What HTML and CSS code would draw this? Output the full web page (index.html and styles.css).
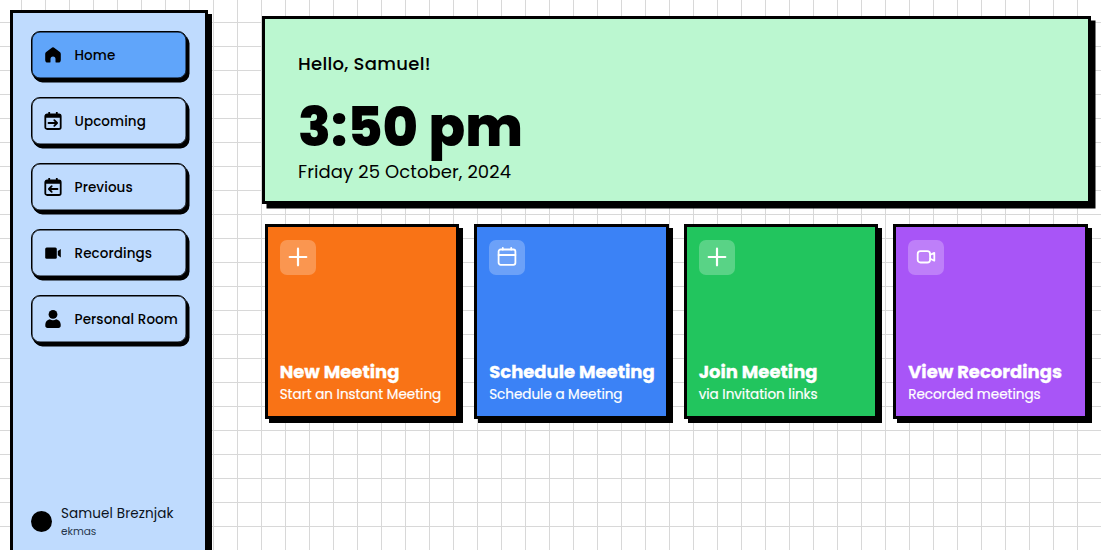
FILE: index.html
```html
<!DOCTYPE html>
<html lang="en">
<head>
<meta charset="utf-8">
<title>Meetings</title>
<link rel="stylesheet" href="styles.css">
</head>
<body>
<div class="app">
  <aside class="sidebar">
    <nav class="nav">
      <a class="nav-item active">
        <svg class="nav-icon" viewBox="0 0 18 18"><path d="M9 1.300c.6 0 1 .2 1.500.6l5 3.900c.9.700 1.300 1.400 1.300 2.500V14c0 1.700-.9 2.600-2.600 2.600h-1.800c-.6 0-.9-.3-.9-.9v-2.600a2.500 2.500 0 0 0-5 0v2.600c0 .6-.3.9-.9.9H3.800c-1.700 0-2.600-.9-2.600-2.600V8.300c0-1.100.4-1.800 1.300-2.500l5-3.900c.5-.4.9-.6 1.500-.6z"/></svg>
        <span>Home</span>
      </a>
      <a class="nav-item">
        <svg class="nav-icon" viewBox="0 0 18 18"><rect class="line" x="1.300" y="2.500" width="15.400" height="14.500" rx="1.800"/><path d="M1 2.500h16v3.300H1zM4.300 0h1.800v3H4.300zM11.900 0h1.800v3h-1.800z"/><path class="line" d="M4.500 11h8.500M10.300 8.200 13.100 11l-2.800 2.800"/></svg>
        <span>Upcoming</span>
      </a>
      <a class="nav-item">
        <svg class="nav-icon" viewBox="0 0 18 18"><rect class="line" x="1.300" y="2.500" width="15.400" height="14.500" rx="1.800"/><path d="M1 2.500h16v3.300H1zM4.300 0h1.800v3H4.300zM11.900 0h1.800v3h-1.800z"/><path class="line" d="M13.500 11H5M7.700 8.200 4.900 11l2.800 2.800"/></svg>
        <span>Previous</span>
      </a>
      <a class="nav-item">
        <svg class="nav-icon" viewBox="0 0 18 18"><rect x="1.200" y="3.500" width="11.600" height="11.300" rx="1.500"/><path d="M13.800 7 16.800 5v8.400l-3-2.200z"/></svg>
        <span>Recordings</span>
      </a>
      <a class="nav-item">
        <svg class="nav-icon" viewBox="0 0 18 18"><circle cx="9" cy="4.400" r="4.400"/><path d="M5.800 9.300c1.900 1.200 4.500 1.200 6.400 0 2.600.5 4.500 2.600 4.500 5.300v1.100c0 1.300-.9 2.200-2.200 2.200h-11c-1.300 0-2.200-.9-2.200-2.200v-1.100c0-2.700 1.900-4.800 4.500-5.300z"/></svg>
        <span>Personal Room</span>
      </a>
    </nav>
    <div class="user">
      <div class="avatar"></div>
      <div class="user-text">
        <div class="user-name">Samuel Breznjak</div>
        <div class="user-handle">ekmas</div>
      </div>
    </div>
  </aside>
  <main class="main">
    <section class="hero">
      <h2 class="greeting">Hello, Samuel!</h2>
      <div class="time">3:50 pm</div>
      <div class="date">Friday 25 October, 2024</div>
    </section>
    <section class="cards">
      <article class="card orange">
        <div class="tile"><svg viewBox="0 0 20 20"><path d="M10 1.700v16.600M1.700 10h16.600"/></svg></div>
        <div><h3>New Meeting</h3><p>Start an Instant Meeting</p></div>
      </article>
      <article class="card blue">
        <div class="tile"><svg class="thin" viewBox="0 0 20 20"><rect x="1.600" y="2.500" width="16.800" height="15.300" rx="2"/><path d="M1.600 8h16.800M5.800 1v1.500M14.200 1v1.500"/></svg></div>
        <div><h3>Schedule Meeting</h3><p>Schedule a Meeting</p></div>
      </article>
      <article class="card green">
        <div class="tile"><svg viewBox="0 0 20 20"><path d="M10 1.700v16.600M1.700 10h16.600"/></svg></div>
        <div><h3>Join Meeting</h3><p>via Invitation links</p></div>
      </article>
      <article class="card purple">
        <div class="tile"><svg class="thin" viewBox="0 0 20 20"><rect x="1.700" y="4.100" width="12.400" height="11.400" rx="2.800"/><path d="M14.300 7.800 18.300 5.900v7.800l-4-1.900"/></svg></div>
        <div><h3>View Recordings</h3><p>Recorded meetings</p></div>
      </article>
    </section>
  </main>
</div>
</body>
</html>
```
FILE: styles.css
```css
* { box-sizing: border-box; }
body {
  margin: 0;
  height: 550px;
  overflow: hidden;
  font-family: Poppins, Inter, "Open Sans", sans-serif;
  color: #000;
  background-color: #fff;
  background-image:
    linear-gradient(to right, #d8d8d8 1px, transparent 1px),
    linear-gradient(to bottom, #d8d8d8 1px, transparent 1px);
  background-size: 24px 24px;
  background-position: 21px 22px;
}
h2, h3, p { margin: 0; }
span, h2, h3, p, .time, .date, .user-name, .user-handle { white-space: nowrap; }
.app { display: flex; gap: 54px; padding: 10px 10px 0; }
.sidebar {
  width: 198px;
  height: 560px;
  flex: none;
  display: flex;
  flex-direction: column;
  justify-content: space-between;
  padding: 18px 18px 28px;
  border: 3px solid #000;
  background: #bfdbfe;
  box-shadow: 4px 4px 0 #000;
}
.nav { display: flex; flex-direction: column; gap: 18px; }
.nav-item {
  width: 156px;
  height: 48px;
  display: flex;
  align-items: center;
  gap: 12px;
  padding: 1px 0 0 12.500px;
  border: 1px solid #000;
  border-radius: 9px;
  background: #bfdbfe;
  box-shadow: inset 0 0 0 .5px #000, 1px 2px 0 #000, 2.500px 3.500px 0 #000;
  font-size: 13.500px;
  font-weight: 500;
  letter-spacing: .1px;
}
.nav-item.active { background: #60a5fa; }
.nav-icon { width: 18px; height: 18px; flex: none; margin-bottom: 2px; margin-left: -.5px; margin-right: .5px; }
.nav-icon .line { fill: none; stroke: #000; stroke-width: 1.800; stroke-linecap: round; stroke-linejoin: round; }
.user { display: flex; align-items: center; gap: 9px; }
.avatar { width: 21px; height: 21px; border-radius: 50%; background: #000; }
.user-name { font-size: 13.500px; line-height: 20px; letter-spacing: .12px; color: #0b1220; }
.user-handle { font-size: 10.500px; line-height: 15px; color: #26364c; }
.main { flex: 1; min-width: 0; padding-top: 6px; }
.hero {
  width: 829px;
  height: 187.500px;
  padding: 31px 33px 0;
  border: 3px solid #000;
  background: #bbf7d0;
  box-shadow: 4.500px 4.500px 0 #000;
}
.greeting { font-size: 18px; line-height: 28px; font-weight: 500; letter-spacing: .3px; }
.time { margin-top: 22px; font-size: 54px; line-height: 54px; font-weight: 800; }
.date { margin-top: 4px; font-size: 18px; line-height: 28px; letter-spacing: .1px; }
.cards { display: grid; grid-template-columns: repeat(4, 194.500px); gap: 15px; padding: 20.700px 2.700px 0; }
.card {
  height: 195px;
  display: flex;
  flex-direction: column;
  justify-content: space-between;
  padding: 12.500px 12px 11px;
  border: 3px solid #000;
  box-shadow: 4px 4px 0 #000;
  color: #fff;
}
.orange { background: #f97316; }
.blue { background: #3b82f6; }
.green { background: #22c55e; }
.purple { background: #a855f7; }
.tile {
  width: 36px;
  height: 35.500px;
  display: grid;
  place-items: center;
  border-radius: 7px;
  background: rgba(255, 255, 255, .25);
}
.tile svg { width: 20px; height: 20px; fill: none; stroke: #fff; stroke-width: 2.200; stroke-linecap: round; stroke-linejoin: round; }
.tile .thin { stroke-width: 1.800; }
.card h3 { font-size: 18px; line-height: 26px; font-weight: 700; -webkit-text-stroke: .3px #fff; }
.card p { font-size: 13.500px; line-height: 20px; -webkit-text-stroke: .2px #fff; }
```
